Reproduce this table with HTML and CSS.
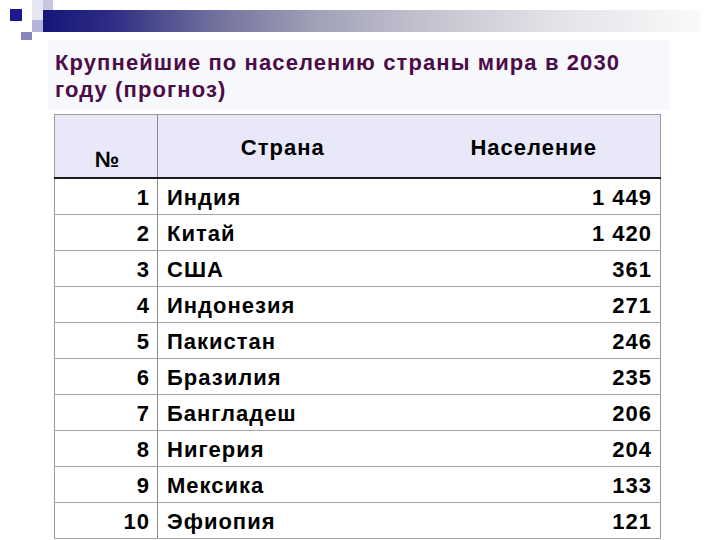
FILE: index.html
```html
<!DOCTYPE html>
<html lang="ru">
<head>
<meta charset="utf-8">
<title>Крупнейшие по населению страны мира в 2030 году</title>
<link rel="stylesheet" href="styles.css">
</head>
<body>
<div class="deco"></div>
<div class="title-box">
  <h1 class="title">Крупнейшие по населению страны мира в 2030<br>году (прогноз)</h1>
</div>
<table class="pop">
  <colgroup>
    <col class="c-num">
    <col class="c-country">
    <col class="c-pop">
  </colgroup>
  <thead>
    <tr>
      <th class="h-num">№</th>
      <th class="h-country">Страна</th>
      <th class="h-pop">Население</th>
    </tr>
  </thead>
  <tbody>
    <tr><td class="num">1</td><td class="country">Индия</td><td class="pop-val">1 449</td></tr>
    <tr><td class="num">2</td><td class="country">Китай</td><td class="pop-val">1 420</td></tr>
    <tr><td class="num">3</td><td class="country">США</td><td class="pop-val">361</td></tr>
    <tr><td class="num">4</td><td class="country">Индонезия</td><td class="pop-val">271</td></tr>
    <tr><td class="num">5</td><td class="country">Пакистан</td><td class="pop-val">246</td></tr>
    <tr><td class="num">6</td><td class="country">Бразилия</td><td class="pop-val">235</td></tr>
    <tr><td class="num">7</td><td class="country">Бангладеш</td><td class="pop-val">206</td></tr>
    <tr><td class="num">8</td><td class="country">Нигерия</td><td class="pop-val">204</td></tr>
    <tr><td class="num">9</td><td class="country">Мексика</td><td class="pop-val">133</td></tr>
    <tr><td class="num">10</td><td class="country">Эфиопия</td><td class="pop-val">121</td></tr>
  </tbody>
</table>
</body>
</html>
```
FILE: styles.css
```css
html, body {
  margin: 0;
  padding: 0;
  background: #ffffff;
}

body {
  font-family: "Liberation Sans", Arial, sans-serif;
  width: 720px;
  height: 540px;
  overflow: hidden;
}

.deco {
  height: 40px;
  background:
    linear-gradient(#1c1c8c, #1c1c8c) 10px 9px / 12px 12px no-repeat,
    linear-gradient(#8686bc, #8686bc) 21px 32px / 11px 11px no-repeat,
    linear-gradient(to right, #16167a 0%, #2c2c84 10%, #70709c 26%, #a2a2b8 42%, #c6c6d2 60%, #e2e2e8 78%, #fafafb 100%) 43px 10px / 657px 22px no-repeat,
    linear-gradient(#b4b4d6, #b4b4d6) 32px 20px / 11px 12px no-repeat,
    linear-gradient(#c6c6de, #c6c6de) 43px 0 / 10px 10px no-repeat,
    linear-gradient(#e6e6f2, #e6e6f2) 32px 0 / 11px 20px no-repeat,
    #ffffff;
}

.title-box {
  margin: 0 50px 0 48px;
  height: 70px;
  box-sizing: border-box;
  padding: 9px 7px 0;
  background: #f7f8fc;
}

.title {
  margin: 0;
  font-size: 22px;
  line-height: 27px;
  letter-spacing: 1.1px;
  font-weight: bold;
  color: #4c0c48;
}

.pop {
  margin: 4px 0 0 54px;
  border-collapse: collapse;
  table-layout: fixed;
  width: 606px;
  border: 1px solid #9a9a9a;
  font-size: 22px;
  letter-spacing: 1px;
  font-weight: bold;
  color: #000000;
}

.c-num { width: 103px; }
.c-country { width: 250px; }
.c-pop { width: 253px; }

.pop thead th {
  height: 54px;
  padding: 6px 0 2px;
  background: #e8e8f8;
  border-bottom: 2px solid #1a1a1a;
  font-weight: bold;
  line-height: 26px;
}

.pop thead th.h-num {
  vertical-align: bottom;
  padding: 0 0 4px 3px;
  height: 58px;
  border-right: 1px solid #8a8a8a;
  text-align: center;
}

.h-country,
.h-pop {
  vertical-align: middle;
  text-align: center;
}

.pop tbody td {
  height: 32px;
  padding: 3px 0 0;
  border-bottom: 1px solid #a4a4a4;
  vertical-align: middle;
  line-height: 26px;
}

.pop tbody td.num {
  text-align: right;
  padding-right: 7px;
  border-right: 1px solid #8a8a8a;
}

.pop tbody td.country {
  text-align: left;
  padding-left: 9px;
}

.pop tbody td.pop-val {
  text-align: right;
  padding-right: 8px;
}
```
